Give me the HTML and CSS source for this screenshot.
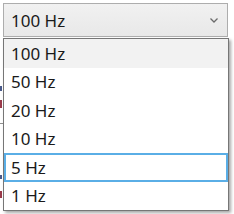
FILE: index.html
```html
<!DOCTYPE html>
<html>
<head>
<meta charset="utf-8">
<link rel="stylesheet" href="styles.css">
</head>
<body>
<div class="behind">
  <span class="mark m1"></span>
  <span class="mark m2"></span>
  <span class="mark m3"></span>
  <span class="mark m4"></span>
  <span class="mark m5"></span>
</div>
<div class="select">
  <span class="value">100 Hz</span>
  <svg class="chev" width="8" height="5" viewBox="0 0 8 5"><path d="M0.5 0.5 L4 4 L7.5 0.5" fill="none" stroke="#6a6a6a" stroke-width="1.3"/></svg>
</div>
<ul class="list">
  <li class="item selected">100 Hz</li>
  <li class="item">50 Hz</li>
  <li class="item">20 Hz</li>
  <li class="item">10 Hz</li>
  <li class="item focus">5 Hz</li>
  <li class="item">1 Hz</li>
</ul>
</body>
</html>
```
FILE: styles.css
```css
html, body {
  margin: 0;
  padding: 0;
  background: #ffffff;
}
body {
  position: relative;
  width: 234px;
  height: 214px;
  overflow: hidden;
  font-family: "Noto Sans", "Open Sans", sans-serif;
  font-size: 17px;
  color: #1a1a1a;
}
.behind {
  position: absolute;
  left: 0;
  top: 0;
  width: 4px;
  height: 214px;
}
.mark {
  position: absolute;
  display: block;
}
.m1 { left: 0; top: 86px; width: 2px; height: 5px; background: #4a5a8a; }
.m2 { left: 0; top: 100px; width: 2px; height: 8px; background: #9a3a4a; }
.m3 { left: 0; top: 123px; width: 4px; height: 1px; background: #909090; }
.m4 { left: 0; top: 175px; width: 2px; height: 4px; background: #4a5a8a; }
.m5 { left: 0; top: 191px; width: 2px; height: 7px; background: #9a3a4a; }
.select {
  position: relative;
  margin: 3px 0 0 3px;
  width: 225px;
  height: 34px;
  box-sizing: border-box;
  border: 1px solid #adadad;
  background: linear-gradient(#f1f1f1, #e8e8e8);
  display: flex;
  align-items: center;
  justify-content: space-between;
  padding: 0 9px 0 7px;
}
.value {
  line-height: 1;
}
.chev {
  display: block;
}
.list {
  position: relative;
  list-style: none;
  margin: 1px 0 0 3px;
  padding: 0;
  width: 226px;
  box-sizing: border-box;
  border: 1px solid #767676;
  background: #ffffff;
  box-shadow: 2px 2px 3px rgba(0, 0, 0, 0.35);
}
.item {
  height: 28.5px;
  box-sizing: border-box;
  display: flex;
  align-items: center;
  padding-left: 7px;
}
.selected {
  background: #f2f2f2;
}
.focus {
  box-shadow: inset 0 0 0 2px #5aaee6;
}
```
